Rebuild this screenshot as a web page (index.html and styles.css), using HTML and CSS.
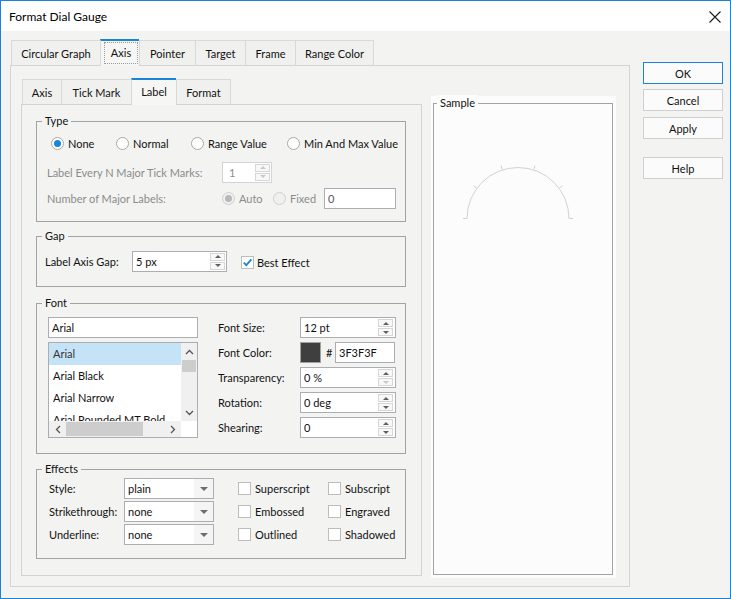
FILE: index.html
```html
<!DOCTYPE html>
<html>
<head>
<meta charset="utf-8">
<title>Format Dial Gauge</title>
<link rel="stylesheet" href="styles.css">
</head>
<body>
<div class="window">
  <div class="titlebar">
    <span class="title">Format Dial Gauge</span>
    <svg class="close" width="12" height="12" viewBox="0 0 12 12"><path d="M0.5 0.5 L11.5 11.5 M11.5 0.5 L0.5 11.5" stroke="#1a1a1a" stroke-width="1.1" fill="none"/></svg>
  </div>
  <div class="body">
    <div class="main">
      <div class="tabs outer-tabs">
        <div class="tab t-circ">Circular Graph</div>
        <div class="tab active t-axis"><span class="focus">Axis</span></div>
        <div class="tab t-pointer">Pointer</div>
        <div class="tab t-target">Target</div>
        <div class="tab t-frame">Frame</div>
        <div class="tab t-range last">Range Color</div>
      </div>
      <div class="outer-panel">
        <div class="inner-col">
          <div class="tabs inner-tabs">
            <div class="tab t-iaxis">Axis</div>
            <div class="tab t-tick">Tick Mark</div>
            <div class="tab active t-label">Label</div>
            <div class="tab t-format last">Format</div>
          </div>
          <div class="inner-panel">
            <div class="group type-group">
              <span class="legend">Type</span>
              <div class="type-radios">
                <span class="radio on"><span class="dot"></span>None</span>
                <span class="radio"><span class="dot"></span>Normal</span>
                <span class="radio"><span class="dot"></span>Range Value</span>
                <span class="radio"><span class="dot"></span>Min And Max Value</span>
              </div>
              <div class="row row-every">
                <span class="lbl dis type-lbl">Label Every N Major Tick Marks:</span>
                <div class="field disabled every-field"><span class="val">1</span><span class="spin"><i class="dis"></i><i class="down dis"></i></span></div>
              </div>
              <div class="row row-number">
                <span class="lbl dis type-lbl">Number of Major Labels:</span>
                <span class="radio dis on opt"><span class="dot"></span>Auto</span>
                <span class="radio dis opt"><span class="dot"></span>Fixed</span>
                <div class="field fixed-field"><span class="val muted">0</span></div>
              </div>
            </div>

            <div class="group gap-group">
              <span class="legend">Gap</span>
              <div class="row row-gap">
                <span class="lbl gap-lbl">Label Axis Gap:</span>
                <div class="field gap-field"><span class="val">5 px</span><span class="spin"><i></i><i class="down"></i></span></div>
                <span class="check on best"><span class="box"><svg width="11" height="11" viewBox="0 0 11 11"><path d="M1.8 5.6 L4.3 8.2 L9.4 2.4" stroke="#1a86d9" stroke-width="1.8" fill="none"/></svg></span>Best Effect</span>
              </div>
            </div>

            <div class="group font-group">
              <span class="legend">Font</span>
              <div class="font-body">
                <div class="font-left">
                  <div class="field name-field"><span class="val">Arial</span></div>
                  <div class="listbox">
                    <div class="lb-items">
                      <div class="lb-item sel">Arial</div>
                      <div class="lb-item">Arial Black</div>
                      <div class="lb-item">Arial Narrow</div>
                      <div class="lb-item">Arial Rounded MT Bold</div>
                    </div>
                    <div class="vscroll">
                      <span class="arr"><svg width="9" height="6" viewBox="0 0 9 6"><polyline points="1,5 4.5,1.5 8,5" stroke="#555" stroke-width="1.3" fill="none"/></svg></span>
                      <span class="vthumb"></span>
                      <span class="spacer"></span>
                      <span class="arr"><svg width="9" height="6" viewBox="0 0 9 6"><polyline points="1,1 4.5,4.5 8,1" stroke="#555" stroke-width="1.3" fill="none"/></svg></span>
                    </div>
                    <div class="hscroll">
                      <span class="arr"><svg width="6" height="9" viewBox="0 0 6 9"><polyline points="5,1 1.5,4.5 5,8" stroke="#555" stroke-width="1.3" fill="none"/></svg></span>
                      <span class="hthumb"></span>
                      <span class="spacer"></span>
                      <span class="arr"><svg width="6" height="9" viewBox="0 0 6 9"><polyline points="1,1 4.5,4.5 1,8" stroke="#555" stroke-width="1.3" fill="none"/></svg></span>
                    </div>
                    <div class="corner"></div>
                  </div>
                </div>
                <div class="font-right">
                  <span class="lbl">Font Size:</span>
                  <div class="field prop-field"><span class="val">12 pt</span><span class="spin"><i></i><i class="down"></i></span></div>
                  <span class="lbl">Font Color:</span>
                  <div class="color-row"><span class="swatch"></span><span class="hash">#</span><div class="field hex-field"><span class="val">3F3F3F</span></div></div>
                  <span class="lbl">Transparency:</span>
                  <div class="field prop-field"><span class="val">0 %</span><span class="spin"><i></i><i class="down dis"></i></span></div>
                  <span class="lbl">Rotation:</span>
                  <div class="field prop-field"><span class="val">0 deg</span><span class="spin"><i></i><i class="down"></i></span></div>
                  <span class="lbl">Shearing:</span>
                  <div class="field prop-field"><span class="val">0</span><span class="spin"><i></i><i class="down"></i></span></div>
                </div>
              </div>
            </div>

            <div class="group effects-group">
              <span class="legend">Effects</span>
              <div class="effects-grid">
                <span class="lbl">Style:</span>
                <div class="combo"><span class="val">plain</span><span class="drop"></span></div>
                <span class="check"><span class="box"></span>Superscript</span>
                <span class="check"><span class="box"></span>Subscript</span>

                <span class="lbl">Strikethrough:</span>
                <div class="combo"><span class="val">none</span><span class="drop"></span></div>
                <span class="check"><span class="box"></span>Embossed</span>
                <span class="check"><span class="box"></span>Engraved</span>

                <span class="lbl">Underline:</span>
                <div class="combo"><span class="val">none</span><span class="drop"></span></div>
                <span class="check"><span class="box"></span>Outlined</span>
                <span class="check"><span class="box"></span>Shadowed</span>
              </div>
            </div>
          </div>
        </div>
        <div class="sample">
          <div class="sample-frame">
            <span class="legend sample-legend">Sample</span>
            <svg class="gauge" width="178" height="130" viewBox="0 0 178 130">
              <g stroke="#d2d2d2" stroke-width="1" fill="none">
                <path d="M33 114.5 A51 51 0 0 1 135 114.5"/>
                <path d="M29 114.5 L33 114.5 M135 114.5 L139 114.5"/>
                <path d="M42.7 84 L39.5 81.7 M68.2 65.5 L67 61.7 M99.8 65.5 L101 61.7 M125.3 84 L128.5 81.7"/>
              </g>
            </svg>
          </div>
        </div>
      </div>
    </div>
    <div class="buttons">
      <div class="btn default">OK</div>
      <div class="btn b-cancel">Cancel</div>
      <div class="btn b-apply">Apply</div>
      <div class="btn b-help">Help</div>
    </div>
  </div>
</div>
</body>
</html>
```
FILE: styles.css
```css
* { box-sizing: border-box; }
html, body { margin: 0; padding: 0; }
body {
  font-family: Lato, "Liberation Sans", Arial, sans-serif;
  font-size: 11px;
  color: #111;
  background: #f3f4f2;
}
.window {
  width: 731px;
  height: 599px;
  border: 1px solid #1883d7;
  background: #f3f4f2;
  display: flex;
  flex-direction: column;
  overflow: hidden;
}
.titlebar {
  height: 30px;
  flex: none;
  background: #fff;
  display: flex;
  align-items: center;
  justify-content: space-between;
  padding: 0 9px 0 8px;
}
.title { font-size: 12px; color: #000; }
.close { display: block; margin-top: 1px; }

.body {
  flex: 1;
  display: flex;
  align-items: flex-start;
  padding: 8px 0 0 9px;
}
.main { width: 620px; display: flex; flex-direction: column; }

/* tabs */
.tabs { display: flex; align-items: flex-end; height: 26px; margin-left: 1px; position: relative; z-index: 1; }
.tab {
  height: 25px;
  border: 1px solid #d9d9d9;
  border-bottom: none;
  border-right: none;
  background: #f0f1ef;
  display: flex;
  align-items: center;
  justify-content: center;
  white-space: nowrap;
  color: #111;
}
.tab.last { border-right: 1px solid #d9d9d9; }
.tab.active {
  height: 27px;
  margin-bottom: -1px;
  background: #f6f7f5;
  border-top: 2px solid #1883d7;
  padding-bottom: 2px;
}
.focus {
  border: 1px dotted #9a9a9a;
  width: 34px;
  height: 22px;
  display: flex;
  align-items: center;
  justify-content: center;
  margin-left: 2px;
}
.t-circ { width: 89px; }
.t-axis { width: 39px; }
.t-pointer { width: 56px; }
.t-target { width: 50px; }
.t-frame { width: 50px; }
.t-range { width: 79px; }
.t-iaxis { width: 39px; }
.t-tick { width: 70px; }
.t-label { width: 45px; }
.t-format { width: 55px; }

.outer-panel {
  height: 522px;
  border: 1px solid #d3d3d3;
  display: flex;
  align-items: flex-start;
  padding: 12px 0 0 10px;
}
.inner-col { width: 401px; display: flex; flex-direction: column; }
.inner-panel {
  height: 472px;
  border: 1px solid #d3d3d3;
  padding: 16px 0 0 14px;
}

/* groups */
.group {
  position: relative;
  width: 370px;
  border: 1px solid #a3a3a3;
}
.legend {
  position: absolute;
  top: -9px;
  left: 5px;
  padding: 0 3px;
  line-height: 16px;
  background: #f3f4f2;
}
.type-group { height: 101px; padding-top: 10px; }
.gap-group { height: 51px; margin-top: 14px; padding: 13px 0 0 8px; }
.font-group { height: 151px; margin-top: 16px; padding: 13px 0 0 11px; }
.effects-group { height: 90px; margin-top: 15px; padding: 8px 0 0 12px; }

.row { display: flex; align-items: center; height: 22px; }
.lbl { white-space: nowrap; }
.dis { color: #8b8b8b; }

.type-radios {
  display: grid;
  grid-template-columns: 65px 75px 96px auto;
  align-items: center;
  height: 22px;
  padding-left: 14px;
  white-space: nowrap;
}
.row-every { margin-top: 7px; padding-left: 10px; }
.row-number { margin-top: 4px; padding-left: 10px; }
.type-lbl { width: 175px; }
.opt { width: 51px; }

/* radios */
.radio { display: flex; align-items: center; gap: 4px; white-space: nowrap; }
.radio .dot {
  width: 13px;
  height: 13px;
  border-radius: 50%;
  border: 1px solid #a8a8a8;
  background: #fff;
  display: flex;
  align-items: center;
  justify-content: center;
  flex: none;
}
.radio.on .dot::after {
  content: "";
  width: 7px;
  height: 7px;
  border-radius: 50%;
  background: #1a86d9;
}
.radio.dis .dot { border-color: #cfcfcf; background: #f0f0f0; }
.radio.dis.on .dot::after { background: #b8b8b8; }

/* fields */
.field {
  height: 21px;
  border: 1px solid #abadb3;
  background: #fff;
  display: flex;
  align-items: center;
  padding-left: 3px;
}
.field .val { flex: 1; white-space: nowrap; overflow: hidden; }
.field.disabled { border-color: #d4d4d4; color: #8b8b8b; }
.field.disabled .val { padding-left: 3px; }
.muted { color: #555; }
.every-field { width: 50px; }
.fixed-field { width: 72px; }
.gap-field { width: 95px; }
.name-field { width: 150px; }
.prop-field { width: 96px; }
.hex-field { width: 60px; }

.spin { display: flex; flex-direction: column; margin-right: 1px; }
.spin i {
  width: 15px;
  height: 8px;
  border: 1px solid #d6d6d6;
  background: #f8f8f8;
  display: flex;
  align-items: center;
  justify-content: center;
}
.spin i + i { margin-top: 1px; }
.spin i::after {
  content: "";
  border-left: 3px solid transparent;
  border-right: 3px solid transparent;
  border-bottom: 3px solid #5f5f5f;
}
.spin i.down::after { border-bottom: none; border-top: 3px solid #5f5f5f; }
.spin i.dis::after { border-bottom-color: #c8c8c8; }
.spin i.down.dis::after { border-top-color: #c8c8c8; }
.prop-field .spin { margin-right: 2px; }

/* checkboxes */
.check { display: flex; align-items: center; gap: 4px; white-space: nowrap; }
.check .box {
  width: 13px;
  height: 13px;
  border: 1px solid #bdbdbd;
  background: #fff;
  flex: none;
  display: flex;
  align-items: center;
  justify-content: center;
}
.check .box svg { display: block; }
.gap-lbl { width: 87px; }
.best { margin-left: 14px; margin-top: 2px; gap: 3px; }

/* font group */
.font-body { display: flex; align-items: flex-start; }
.font-left { width: 150px; display: flex; flex-direction: column; gap: 4px; }
.listbox {
  width: 150px;
  height: 96px;
  border: 1px solid #abadb3;
  background: #fff;
  display: grid;
  grid-template-columns: 132px 16px;
  grid-template-rows: 78px 16px;
}
.lb-items { overflow: hidden; }
.lb-item { height: 22px; line-height: 22px; padding-left: 4px; white-space: nowrap; }
.lb-item.sel { background: #c5e3f6; color: #333; }
.vscroll { background: #f0f0f0; display: flex; flex-direction: column; }
.hscroll { background: #f0f0f0; display: flex; }
.arr { flex: none; width: 16px; height: 17px; display: flex; align-items: center; justify-content: center; }
.hscroll .arr { width: 17px; height: 16px; }
.arr svg { display: block; }
.vthumb { height: 12px; margin: 0 1px; background: #cdcdcd; flex: none; }
.hthumb { width: 77px; margin: 1px 0; background: #cdcdcd; flex: none; }
.spacer { flex: 1; }
.corner { background: #fff; }

.font-right {
  margin-left: 20px;
  display: grid;
  grid-template-columns: 82px 96px;
  grid-auto-rows: 21px;
  row-gap: 4px;
  align-items: center;
}
.color-row { display: flex; align-items: center; height: 21px; }
.swatch { width: 21px; height: 21px; border: 1px solid #a0a0a0; background: #3f3f3f; flex: none; }
.hash { width: 14px; padding-left: 5px; }

/* effects */
.effects-grid {
  display: grid;
  grid-template-columns: 75px 114px 90px auto;
  grid-auto-rows: 21px;
  row-gap: 2px;
  align-items: center;
}
.combo {
  width: 90px;
  height: 21px;
  border: 1px solid #abadb3;
  background: #fff;
  display: flex;
  align-items: stretch;
}
.combo .val { flex: 1; padding-left: 3px; line-height: 19px; }
.combo .drop {
  width: 19px;
  background: #f5f5f5;
  display: flex;
  align-items: center;
  justify-content: center;
}
.combo .drop::after {
  content: "";
  border-left: 4px solid transparent;
  border-right: 4px solid transparent;
  border-top: 4px solid #6e6e6e;
}

/* sample */
.sample {
  width: 185px;
  height: 482px;
  margin: 18px 0 0 9px;
  background: #fbfcfb;
  padding: 7px 3px 3px 2px;
}
.sample-frame {
  position: relative;
  height: 100%;
  border: 1px solid #a3a3a3;
}
.sample-legend { left: 3px; background: #fbfcfb; }
.gauge { display: block; }

/* buttons */
.buttons { margin: 23px 0 0 13px; display: flex; flex-direction: column; }
.btn {
  width: 80px;
  height: 22px;
  border: 1px solid #cfcfcf;
  background: #fbfbfb;
  display: flex;
  align-items: center;
  justify-content: center;
  color: #111;
}
.btn.default { border-color: #1883d7; }
.b-cancel { margin-top: 5px; }
.b-apply { margin-top: 6px; }
.b-help { margin-top: 18px; }
```
